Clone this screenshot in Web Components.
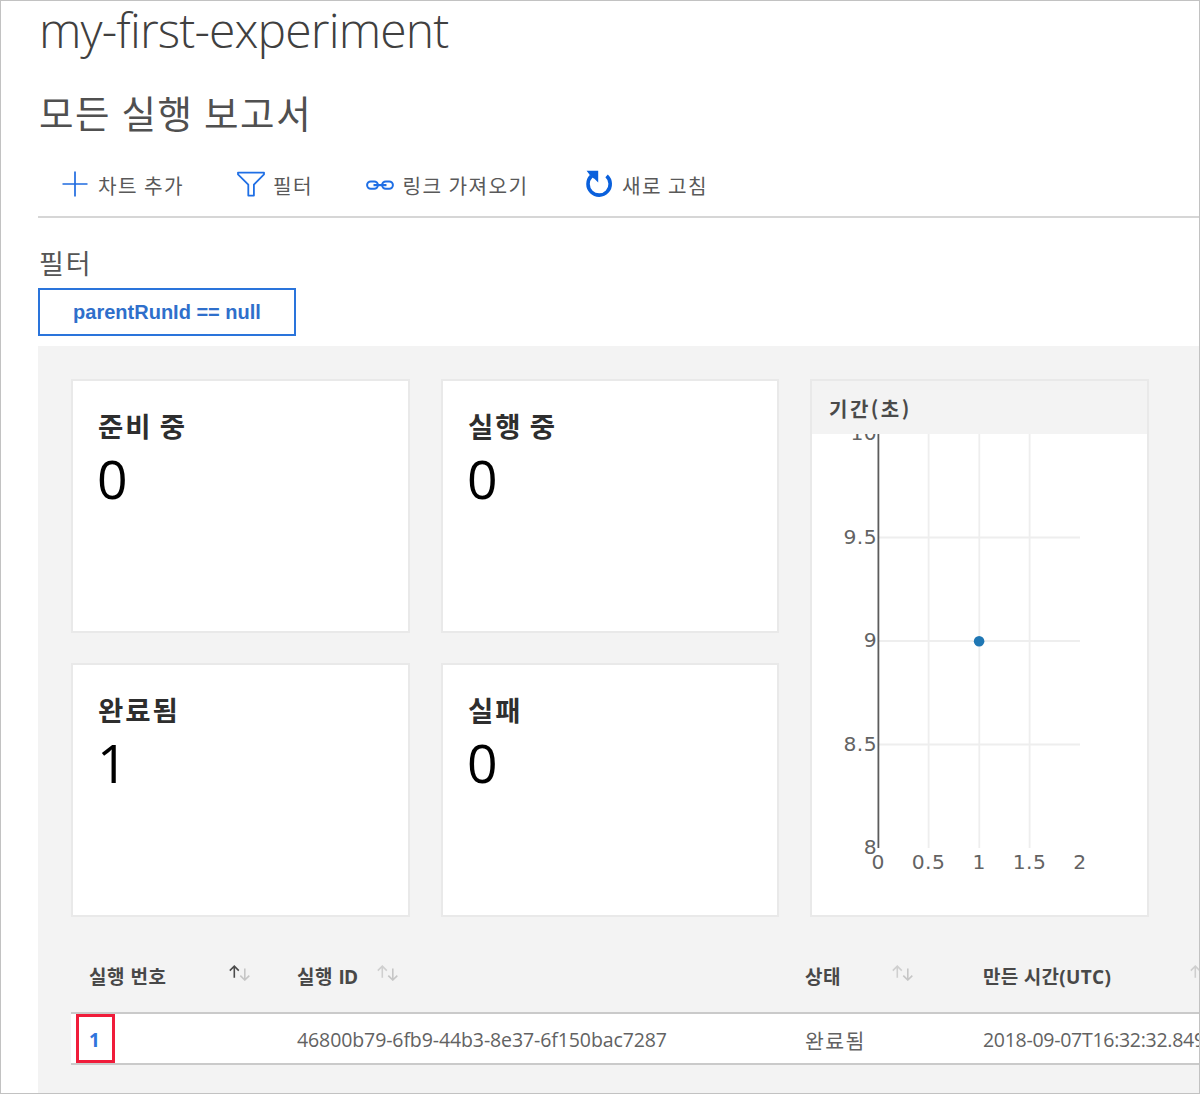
<!DOCTYPE html>
<html lang="ko">
<head>
<meta charset="utf-8">
<title>my-first-experiment</title>
<style>
  html, body { margin: 0; padding: 0; background: #fff; }
  body { height: 1094px; overflow: hidden; }
</style>
</head>
<body>
<experiment-report heading="my-first-experiment" subheading="모든 실행 보고서">
  <tool-bar slot="toolbar">
    <tool-button icon="plus" style="--gap:10px;--w:174.5px">차트 추가</tool-button>
    <tool-button icon="funnel" style="--gap:8.5px;--w:129.5px">필터</tool-button>
    <tool-button icon="link" style="--gap:8.5px;--w:219px">링크 가져오기</tool-button>
    <tool-button icon="refresh" style="--gap:9px;--w:140px">새로 고침</tool-button>
  </tool-bar>
  <filter-chip slot="filters">parentRunId == null</filter-chip>
  <stat-card label="준비 중" slot="cards">0</stat-card>
  <stat-card label="실행 중" slot="cards">0</stat-card>
  <duration-chart label="기간(초)" slot="cards"></duration-chart>
  <stat-card label="완료됨" slot="cards">1</stat-card>
  <stat-card label="실패" slot="cards">0</stat-card>
  <runs-table slot="table"></runs-table>
</experiment-report>

<script>
const CJK = '"Noto Sans CJK KR", sans-serif';
const LATIN = '"Open Sans", "Noto Sans CJK KR", sans-serif';

function define(name, render) {
  customElements.define(name, class extends HTMLElement {
    constructor() {
      super();
      this.attachShadow({ mode: 'open' });
    }
    connectedCallback() {
      this.shadowRoot.innerHTML = render(this);
    }
  });
}

const ICONS = {
  plus: `<svg width="26" height="26" viewBox="0 0 26 26" fill="none" stroke="#1f6be0" stroke-width="1.7"><path d="M13 .5v25M.5 13h25"/></svg>`,
  funnel: `<svg width="28" height="26" viewBox="0 0 28 26" fill="none" stroke="#1f6fe5" stroke-width="1.8" stroke-linejoin="round"><path d="M1 1.6h26v1.8L16.9 13.6v11h-5.6v-11L1 3.4z"/></svg>`,
  link: `<svg width="28" height="26" viewBox="0 0 28 26" fill="none" stroke="#1f6fe5" stroke-width="2"><rect x="1.1" y="10.4" width="10.8" height="7.4" rx="3.7"/><rect x="16.1" y="10.4" width="10.8" height="7.4" rx="3.7"/><path d="M7.5 14.1h13" stroke-width="2.2"/></svg>`,
  refresh: `<svg width="28" height="30" viewBox="0 0 28 30"><path d="M6.3 7.1A11.1 11.1 0 1 0 21.6 6.8" fill="none" stroke="#0a60dc" stroke-width="3.6"/><path d="M1.6 1.8h11.6v11.6L9.4 9.8 6.5 8.2z" fill="#0a60dc"/></svg>`
};

define('tool-button', el => `
  <style>
    :host { display: flex; align-items: center; gap: var(--gap); width: var(--w); height: 38px;
      font: 400 20.2px/38px ${CJK}; letter-spacing: 1.4px; word-spacing: -1px; color: #595959; white-space: nowrap; }
    svg { display: block; flex: none; margin-bottom: 1px; }
    span { padding-top: 3px; }
  </style>
  ${ICONS[el.getAttribute('icon')]}<span><slot></slot></span>`);

define('tool-bar', () => `
  <style>
    :host { display: flex; align-items: center; height: 63px; border-bottom: 2px solid #d6d6d6; padding-left: 24px; }
  </style>
  <slot></slot>`);

define('filter-chip', () => `
  <style>
    :host { display: flex; align-items: center; justify-content: center; box-sizing: border-box;
      width: 258px; height: 48px; border: 2px solid #2a74db; background: #fff;
      font: 700 20px/24px "Liberation Sans", sans-serif; color: #2f6fcb; }
  </style>
  <span><slot></slot></span>`);

define('stat-card', el => `
  <style>
    :host { display: flex; flex-direction: column; box-sizing: border-box; border: 2px solid #e9e9e9; background: #fff; padding: 24px 25px 0; }
    .label { font: 700 27.5px/40px ${CJK}; letter-spacing: 1.9px; word-spacing: -2.3px; color: #2e2e2e; }
    .value { font: 400 53.5px/60px ${LATIN}; color: #000; margin: 4px 0 0 -1px; }
  </style>
  <div class="label">${el.getAttribute('label')}</div>
  <div class="value"><slot></slot></div>`);

define('duration-chart', el => {
  const xs = [[878.3, '0'], [928.6, '0.5'], [979.3, '1'], [1029.6, '1.5'], [1080, '2']];
  const ys = [[434, '10'], [537.5, '9.5'], [641, '9'], [744.5, '8.5'], [848, '8']];
  return `
  <style>
    :host { display: flex; flex-direction: column; box-sizing: border-box; grid-area: 1 / 3 / span 2 / 4; border: 2px solid #e9e9e9; background: #fff; }
    header { height: 53px; background: #f3f3f3; padding-left: 17px; box-sizing: border-box;
      font: 700 20px/56px ${CJK}; letter-spacing: 2.5px; color: #4a4a4a; }
    svg { display: block; }
    text { font: 400 20.3px "DejaVu Sans", sans-serif; letter-spacing: .5px; fill: #636363; }
  </style>
  <header>${el.getAttribute('label')}</header>
  <svg width="335" height="480" viewBox="812 434 335 480">
    <g stroke="#eee" stroke-width="1.8">
      ${xs.slice(1, 4).map(([x]) => `<path d="M${x} 434V848"/>`).join('')}
      ${ys.slice(1, 4).map(([y]) => `<path d="M879 ${y}H1080"/>`).join('')}
    </g>
    <path d="M878.4 434V848" stroke="#5c5c5c" stroke-width="1.8"/>
    <circle cx="979.1" cy="641.2" r="5.3" fill="#1f77b4"/>
    <g text-anchor="end">${ys.map(([y, t]) => `<text x="877.2" y="${y + 6.4}">${t}</text>`).join('')}</g>
    <g text-anchor="middle">${xs.map(([x, t]) => `<text x="${x}" y="869.3">${t}</text>`).join('')}</g>
  </svg>`;
});

define('sort-icon', el => `
  <style>:host { display: block; flex: none; height: 24px; } svg { display: block; }</style>
  <svg width="21" height="16" viewBox="0 0 21 16" fill="none" stroke-width="1.6">
    <path d="M5.3 12.8V1.2M.8 5.6 5.3 1.2 9.8 5.6" stroke="${el.hasAttribute('active') ? '#4c4c4c' : '#cfcfcf'}"/>
    <path d="M15.8 3.6V15M11.3 10.6 15.8 15 20.3 10.6" stroke="#c6c6c6"/>
  </svg>`);

define('runs-table', () => `
  <style>
    :host { display: block; width: 1200px; }
    .row { display: grid; grid-template-columns: 208px 508px 178px 306px; }
    .row > div { display: flex; align-items: center; white-space: nowrap; padding-left: 18px; }
    .head { height: 72px; font: 700 19px/30px ${LATIN}; letter-spacing: .5px; color: #484848; }
    .head > div { padding-top: 2px; }
    .head span { width: var(--lw); }
    .head .caps { font-weight: 700; letter-spacing: -.6px; }
    .body { height: 49px; background: #fff; border-top: 2px solid #cacaca; border-bottom: 2px solid #cacaca;
      font: 400 19.5px/30px ${LATIN}; color: #626262; }
    .body > div { padding-top: 3px; }
    .body .num { padding: 0 0 0 5px; }
    .num a { display: flex; align-items: center; box-sizing: border-box; width: 39px; height: 49px; padding: 3px 0 0 10px; border: 3px solid #f01c3a;
      color: #2f74dc; font-weight: 700; font-size: 19px; }
    .id { letter-spacing: -.1px; }
    .body .state { font-size: 20.5px; letter-spacing: 1.4px; padding-top: 4px; }
    .date { letter-spacing: -.28px; }
  </style>
  <div class="row head">
    <div style="--lw:140px"><span>실행 번호</span><sort-icon active></sort-icon></div>
    <div style="--lw:79.5px"><span>실행 <b class="caps">ID</b></span><sort-icon></sort-icon></div>
    <div style="--lw:87px"><span>상태</span><sort-icon></sort-icon></div>
    <div style="--lw:207px;letter-spacing:.3px"><span>만든 시간(UTC)</span><sort-icon></sort-icon></div>
  </div>
  <div class="row body">
    <div class="num"><a>1</a></div>
    <div class="id">46800b79-6fb9-44b3-8e37-6f150bac7287</div>
    <div class="state">완료됨</div>
    <div class="date">2018-09-07T16:32:32.849</div>
  </div>`);

define('experiment-report', el => `
  <style>
    :host { display: flex; flex-direction: column; box-sizing: border-box; width: 1200px; height: 1094px;
      overflow: hidden; border: 1px solid #c2c2c2; background: #fff; padding-left: 37px; }
    h1, h2, h3 { margin: 0; flex: none; white-space: nowrap; }
    h1 { height: 69px; padding-left: 1px; font: 300 48px/57px ${LATIN}; letter-spacing: -.85px; color: #404040; }
    h2 { height: 83px; padding-left: 1px; font: 400 37.5px/83px ${CJK}; letter-spacing: 1.6px; word-spacing: -1.8px; color: #505050; }
    h3 { height: 52px; margin-top: 18px; padding-left: 1px; font: 400 27px/53px ${CJK}; letter-spacing: 1.8px; color: #555; }
    .panel { flex: 1; margin-top: 10px; padding: 33px 0 0 33px; background: #f3f3f3; overflow: hidden; }
    .cards { display: grid; grid-template-columns: 339px 338px 339px; grid-template-rows: 254px 254px; gap: 30px 31px; }
    .table { margin-top: 23px; }
  </style>
  <h1>${el.getAttribute('heading')}</h1>
  <h2>${el.getAttribute('subheading')}</h2>
  <slot name="toolbar"></slot>
  <h3>필터</h3>
  <slot name="filters"></slot>
  <div class="panel">
    <div class="cards"><slot name="cards"></slot></div>
    <div class="table"><slot name="table"></slot></div>
  </div>`);
</script>
</body>
</html>
